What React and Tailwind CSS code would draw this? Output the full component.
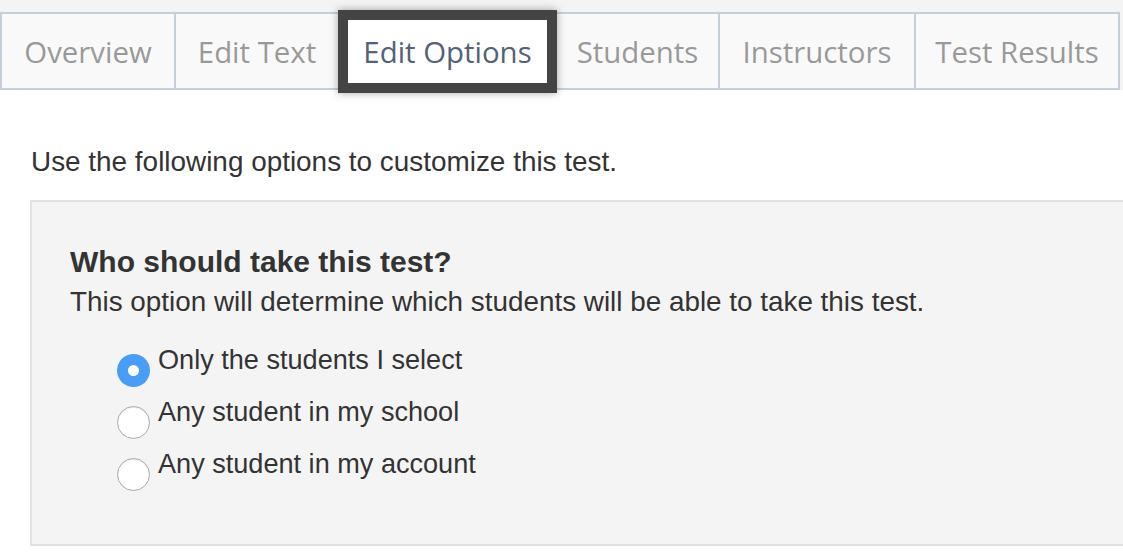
import React from "react";

const tabs = [
  { label: "Overview", w: "w-[172px]", border: "" },
  { label: "Edit Text", w: "w-[164px]", border: "border-l-2 border-[#c5cfdc]" },
  { label: "Edit Options", w: "w-[219px]", active: true },
  { label: "Students", w: "w-[161px]", border: "" },
  { label: "Instructors", w: "w-[196px]", border: "border-l-2 border-[#c5cfdc]" },
  { label: "Test Results", w: "w-[204px]", border: "border-l-2 border-[#c5cfdc]" },
];

const options = [
  { label: "Only the students I select", checked: true },
  { label: "Any student in my school", checked: false },
  { label: "Any student in my account", checked: false },
];

function Radio({ checked }) {
  if (checked) {
    return (
      <span className="mt-[20px] flex h-[33px] w-[33px] shrink-0 items-center justify-center rounded-full bg-[#4a9df5]">
        <span className="h-[11px] w-[11px] rounded-full bg-white" />
      </span>
    );
  }
  return (
    <span className="mt-[20px] block h-[33px] w-[33px] shrink-0 rounded-full border border-[#a9a9a9] bg-white shadow-[inset_0_1px_1px_rgba(0,0,0,0.08)]" />
  );
}

export default function App() {
  return (
    <div className="relative h-[559px] w-[1123px] overflow-hidden bg-white">
      <div className="bg-[#f4f4f4] pt-[12px]" style={{ fontFamily: '"Open Sans", sans-serif' }}>
        <div className="flex h-[78px] w-[1120px] border-2 border-[#c5cfdc] bg-[#f9f9f9]">
          {tabs.map((t) =>
            t.active ? (
              <div
                key={t.label}
                className={`${t.w} relative z-10 mt-[-4px] flex h-[83px] shrink-0 items-center justify-center border-[10px] border-[#444444] bg-white pt-[2px] text-[29.4px] text-[#536277] shadow-[0_0_8px_rgba(0,0,0,0.35)]`}
              >
                {t.label}
              </div>
            ) : (
              <div
                key={t.label}
                className={`${t.w} ${t.border} flex shrink-0 items-center justify-center pt-[2px] text-[29.4px] text-[#999999]`}
              >
                {t.label}
              </div>
            )
          )}
        </div>
      </div>

      <div className="text-[#333333]" style={{ fontFamily: '"Liberation Sans", Arial, sans-serif' }}>
        <p className="ml-[31px] mt-[52px] text-[27.9px] leading-[40px]">
          Use the following options to customize this test.
        </p>
        <div className="ml-[30px] mt-[18px] h-[346px] w-[1200px] border-2 border-[#e1e1e1] bg-[#f4f4f4] pl-[38px] pt-[40px]">
          <h2 className="text-[30px] font-bold leading-[40px]">Who should take this test?</h2>
          <p className="text-[27.85px] leading-[40px]">
            This option will determine which students will be able to take this test.
          </p>
          <div className="ml-[47px] mt-[12px] flex flex-col">
            {options.map((o) => (
              <label key={o.label} className="flex h-[52px] gap-[8px]">
                <Radio checked={o.checked} />
                <span className="text-[27.1px] leading-[52px]">{o.label}</span>
              </label>
            ))}
          </div>
        </div>
      </div>
    </div>
  );
}
